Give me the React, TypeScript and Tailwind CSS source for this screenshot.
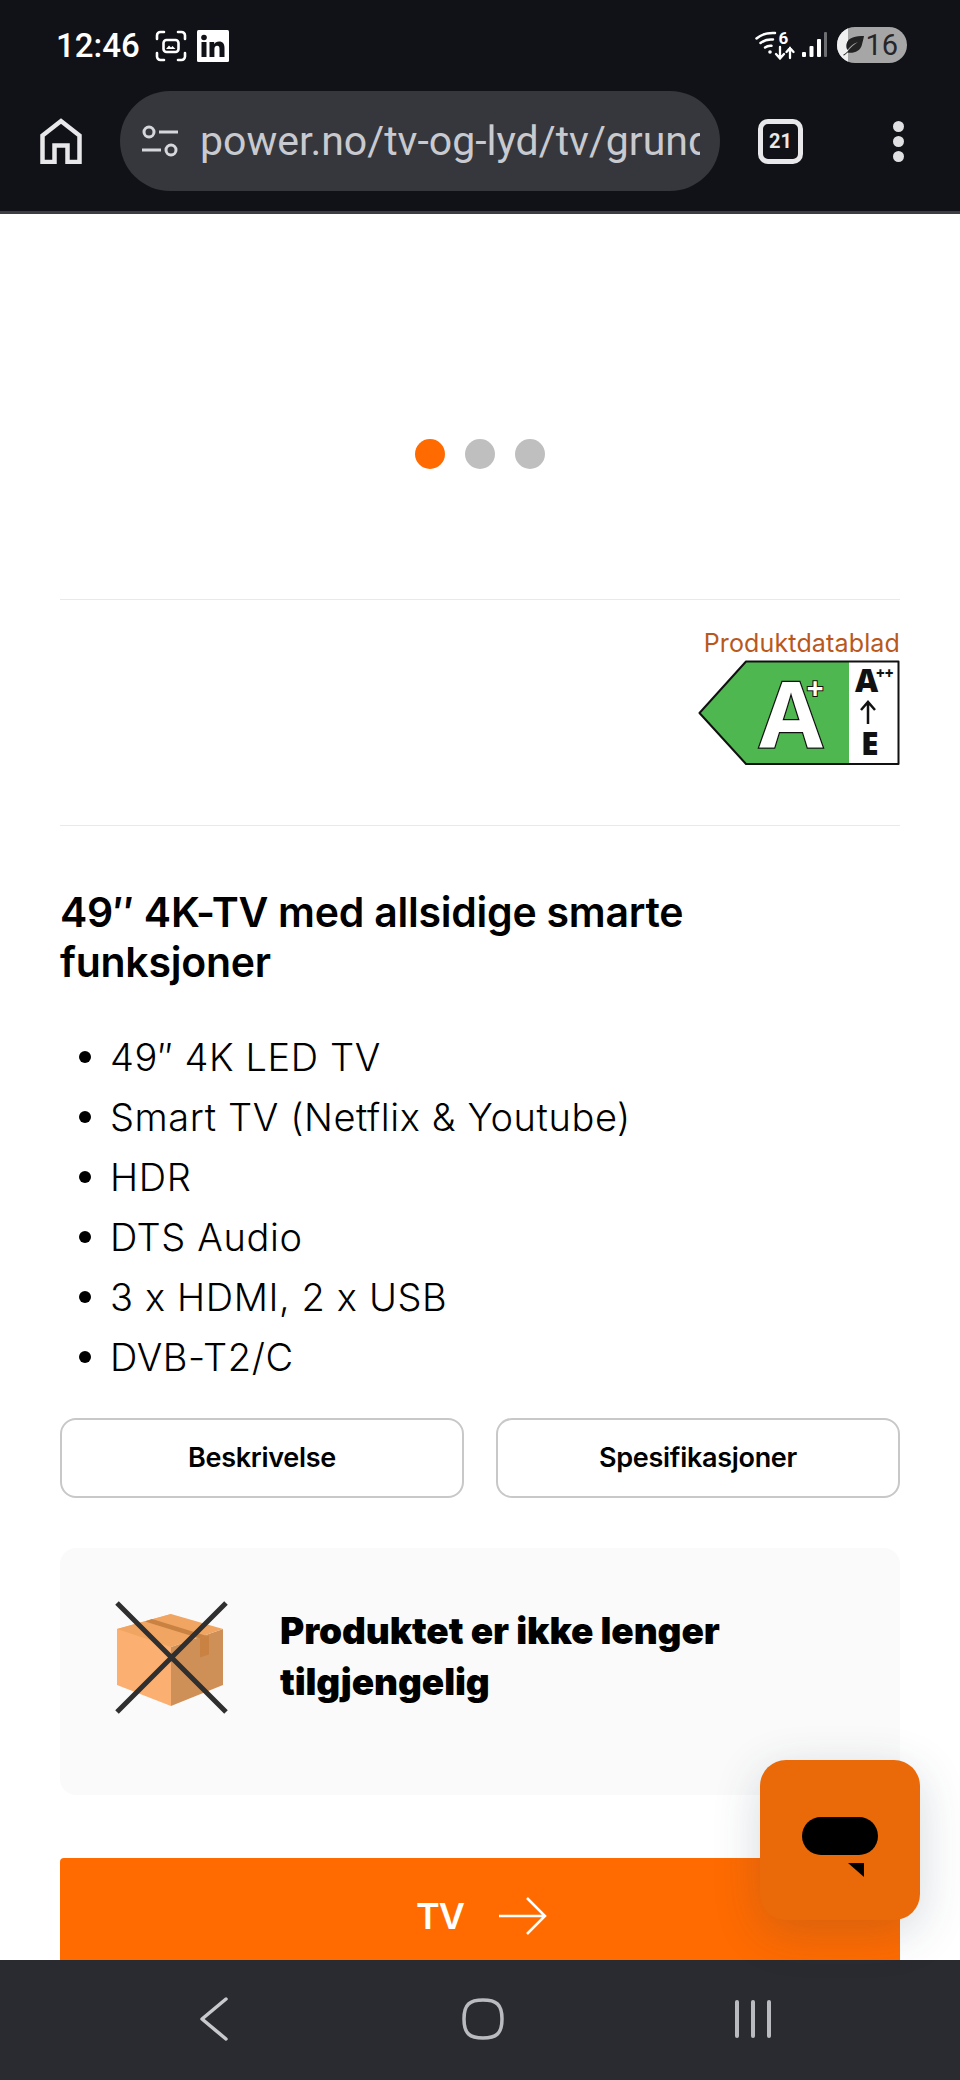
const specs = ['49″ 4K LED TV', 'Smart TV (Netflix & Youtube)', 'HDR', 'DTS Audio', '3 x HDMI, 2 x USB', 'DVB-T2/C']

function ScreenshotIcon() {
  return (
    <svg width="32" height="32" viewBox="0 0 32 32" fill="none" stroke="#fff" strokeWidth="2.6" strokeLinecap="round">
      <path d="M2 9V5.5A3.5 3.5 0 0 1 5.5 2H9M23 2h3.5A3.5 3.5 0 0 1 30 5.500V9M30 23v3.500a3.500 3.500 0 0 1-3.500 3.500H23M9 30H5.500A3.500 3.500 0 0 1 2 26.500V23" />
      <rect x="8.500" y="10" width="15" height="12" rx="3" />
      <path d="M11 19l3-3.500 2 2 1.500-1.500 3 3z" fill="#fff" stroke="none" />
    </svg>
  )
}

function LinkedInIcon() {
  return (
    <svg width="32" height="32" viewBox="0 0 32 32">
      <rect width="32" height="32" rx="1.500" fill="#fff" />
      <rect x="4.500" y="12" width="5" height="15" fill="#111217" />
      <circle cx="7" cy="7.500" r="2.800" fill="#111217" />
      <path d="M12.500 12h4.700v2.200c.9-1.600 2.600-2.600 4.800-2.600 4 0 5.500 2.600 5.500 6.500V27h-5v-8c0-2-.6-3.200-2.400-3.200s-2.700 1.300-2.700 3.200v8h-4.900z" fill="#111217" />
    </svg>
  )
}

function WifiIcon() {
  return (
    <svg width="40" height="30" viewBox="0 0 40 30" fill="none" stroke="#fff" strokeLinecap="round">
      <path d="M1.500 8.500C6 4.500 12 2.500 20 3" strokeWidth="2.500" />
      <path d="M5.500 13C9 10 13 9 18 9.500" strokeWidth="2.500" />
      <path d="M10 17.500c2-1.500 4-2 6.500-1.700" strokeWidth="2.500" />
      <circle cx="15" cy="22" r="1.800" fill="#fff" stroke="none" />
      <path d="M25 17v11M21 24l4 4.500 4-4.500M35 28V18M31.500 22l3.500-4 3.500 4" strokeWidth="2.300" />
      <text x="23.500" y="14" fill="#fff" stroke="none" fontSize="17" fontWeight="700" fontFamily="Roboto, sans-serif">6</text>
    </svg>
  )
}

function SignalIcon() {
  return (
    <svg width="25" height="26" viewBox="0 0 25 26">
      <rect x="0" y="20" width="4" height="5" rx="1" fill="#fff" />
      <rect x="7.500" y="14" width="4" height="11" rx="1" fill="#fff" />
      <rect x="15" y="7" width="4" height="18" rx="1" fill="#fff" />
      <rect x="22" y="0" width="3" height="25" rx="1" fill="#6d6e72" />
    </svg>
  )
}

function Battery() {
  return (
    <div className="relative flex h-[36px] w-[70px] items-center justify-end overflow-hidden rounded-full bg-[#a6a6a6] pr-[9px]">
      <div className="absolute bottom-0 left-0 top-0 w-[11px] bg-[#f0f0f0]" />
      <svg className="absolute left-[5px] top-[8px]" width="24" height="21" viewBox="0 0 24 21">
        <path d="M22 1C14 1 6 2 4.500 9c-.5 2.500 0 4.500 1 6C10 9.500 13 8 16 7c-4 2.500-7 5-10.500 9.500C4 18 2.500 19 1 20l1 .5c1.500-1 2.500-2 3.500-3 6 1 13-1 14.500-8C20.500 7 21.500 4 22 1z" fill="#222" />
      </svg>
      <span className="relative font-['Roboto',sans-serif] text-[29px] leading-none text-[#26262a]">16</span>
    </div>
  )
}

function HomeIcon() {
  return (
    <svg width="42" height="46" viewBox="0 0 42 46" fill="none" stroke="#e8e8ea" strokeWidth="4.500" strokeLinejoin="miter">
      <path d="M2.500 44V17.500L21 3l18.500 14.500V44H27.500V27.500h-13V44z" />
    </svg>
  )
}

function TuneIcon() {
  return (
    <svg width="38" height="32" viewBox="0 0 38 32" fill="none" stroke="#d6d7dc" strokeWidth="3">
      <circle cx="8" cy="7" r="5" />
      <path d="M18 7h19M1 25h19" />
      <circle cx="30" cy="25" r="5" />
    </svg>
  )
}

function EnergyLabel() {
  return (
    <svg width="202" height="106" viewBox="0 0 202 106" fontFamily="'Open Sans', sans-serif">
      <path d="M48 1.500H151V104H48L1.500 53z" fill="#4fb74f" />
      <path d="M48 1.500H200.500V104H48L1.500 53z" fill="none" stroke="#111" strokeWidth="2" strokeLinejoin="round" />
      <text x="93" y="88" textAnchor="middle" fontSize="92" fontWeight="700" fill="#fff" stroke="#111" strokeWidth="2.500" paintOrder="stroke">A</text>
      <text x="117" y="39" textAnchor="middle" fontSize="30" fontWeight="700" fill="#fff" stroke="#111" strokeWidth="2" paintOrder="stroke">+</text>
      <text x="157" y="32" fontSize="32" fontWeight="800" fill="#111">A</text>
      <text x="178" y="19" fontSize="15" fontWeight="800" fill="#111">++</text>
      <path d="M170 64V42M163 50l7-8 7 8" fill="none" stroke="#111" strokeWidth="2.500" />
      <text x="163" y="95" fontSize="32" fontWeight="800" fill="#111">E</text>
    </svg>
  )
}

function BoxCrossed() {
  return (
    <svg width="116" height="116" viewBox="0 0 116 116">
      <path d="M59 14L5 29v56l54 21z" fill="#fbb072" />
      <path d="M59 47l52-18v56l-52 21z" fill="#cf9058" />
      <path d="M59 14l52 15-52 18L5 29z" fill="#f0a562" />
      <path d="M33 21.500l7-2.500 55 17-7 2.500z" fill="#c98242" />
      <path d="M88 38.500l9-3v19l-9 3z" fill="#c98242" />
      <path d="M5 3l109 109M114 3L5 112" stroke="#2f2f2f" strokeWidth="5" />
    </svg>
  )
}

export default function App() {
  return (
    <div className="relative flex h-[2080px] w-[960px] flex-col overflow-hidden bg-white font-['Inter',sans-serif]">
      {/* Browser chrome */}
      <header className="h-[214px] shrink-0 border-b-[3px] border-[#3d3e43] bg-[#111217]">
        <div className="flex h-[91px] items-start justify-between pl-[56px] pr-[53px] pt-[27px]">
          <div className="flex items-center">
            <span className="w-[99px] font-['Roboto',sans-serif] text-[33px] font-medium leading-[38px] text-white">12:46</span>
            <ScreenshotIcon />
            <span className="ml-[10px]"><LinkedInIcon /></span>
          </div>
          <div className="flex items-center">
            <WifiIcon />
            <span className="ml-[7px] mr-[10px]"><SignalIcon /></span>
            <Battery />
          </div>
        </div>
        <div className="flex h-[100px] items-center">
          <div className="ml-[40px] w-[80px]"><HomeIcon /></div>
          <div className="flex h-[100px] w-[600px] items-center overflow-hidden rounded-full bg-[#36373c] pl-[21px]">
            <TuneIcon />
            <div className="ml-[21px] w-[500px] overflow-hidden whitespace-nowrap font-['Roboto',sans-serif] text-[41px] leading-[48px] text-[#c9cad0]">
              power.no/tv-og-lyd/tv/grundig
            </div>
          </div>
          <div className="ml-[38px] flex h-[45px] w-[45px] items-center justify-center rounded-[10px] border-[5px] border-[#e8e8ea] font-['Roboto',sans-serif] text-[20px] font-bold leading-none text-[#e8e8ea]">21</div>
          <div className="ml-[90px] flex flex-col gap-[4px]">
            <span className="h-[11px] w-[11px] rounded-full bg-[#e0e0e2]" />
            <span className="h-[11px] w-[11px] rounded-full bg-[#e0e0e2]" />
            <span className="h-[11px] w-[11px] rounded-full bg-[#e0e0e2]" />
          </div>
        </div>
      </header>

      {/* Page content */}
      <main className="min-h-0 flex-1 overflow-hidden px-[60px]">
        <div className="flex h-[386px] items-start justify-center gap-[20px] border-b border-[#e9e9e9] pt-[225px]">
          <span className="h-[30px] w-[30px] rounded-full bg-[#ff6b00]" />
          <span className="h-[30px] w-[30px] rounded-full bg-[#bfbfbf]" />
          <span className="h-[30px] w-[30px] rounded-full bg-[#bfbfbf]" />
        </div>

        <div className="flex h-[226px] flex-col items-end border-b border-[#e9e9e9] pt-[28px]">
          <div className="mb-[2px] text-[25px] leading-[30px] tracking-[0.15px] text-[#b9581e]">Produktdatablad</div>
          <EnergyLabel />
        </div>

        <h1 className="mt-[61px] text-[41px] font-semibold leading-[50px] tracking-[-0.25px] text-black">
          49″ 4K-TV med allsidige smarte
          <br />
          funksjoner
        </h1>

        <ul className="mt-[40px]">
          {specs.map((spec) => (
            <li key={spec} className="flex h-[60px] items-center gap-[19px] pl-[19px] text-[38px] font-light leading-[60px] tracking-[0.6px] text-black">
              <span className="h-[12px] w-[12px] rounded-full bg-black" />
              {spec}
            </li>
          ))}
        </ul>

        <div className="mt-[31px] grid grid-cols-2 gap-[32px]">
          <button className="h-[80px] rounded-[16px] border-2 border-[#c8c8c8] bg-white text-[27px] font-semibold tracking-[-0.3px] text-black">Beskrivelse</button>
          <button className="h-[80px] rounded-[16px] border-2 border-[#c8c8c8] bg-white text-[27px] font-semibold tracking-[-0.3px] text-black">Spesifikasjoner</button>
        </div>

        <div className="mt-[50px] flex h-[247px] items-start rounded-[16px] bg-[#fafafa] pl-[52px] pt-[52px]">
          <BoxCrossed />
          <p className="ml-[52px] mt-[5px] text-[37px] font-black leading-[51px] tracking-[-0.1px] text-black">
            Produktet er ikke lenger
            <br />
            tilgjengelig
          </p>
        </div>

        <div className="mt-[63px] flex h-[120px] items-start justify-center gap-[35px] rounded-t-[4px] bg-[#ff6b00] pl-[3px] pt-[38px]">
          <span className="text-[36px] font-semibold leading-[40px] tracking-[-1px] text-white">TV</span>
          <svg width="48" height="40" viewBox="0 0 48 40" fill="none" stroke="#fff" strokeWidth="2.500">
            <path d="M0 20h46M28 2l18 18-18 18" />
          </svg>
        </div>
      </main>

      {/* Android nav bar */}
      <nav className="flex h-[120px] shrink-0 items-center bg-[#2a2b30] pb-[2px]">
        <div className="ml-[200px]">
          <svg width="28" height="44" viewBox="0 0 28 44" fill="none" stroke="#c8c9cc" strokeWidth="3.500" strokeLinecap="round" strokeLinejoin="round">
            <path d="M26 2L2 22l24 20" />
          </svg>
        </div>
        <div className="ml-[234px]">
          <svg width="42" height="42" viewBox="0 0 42 42" fill="none" stroke="#b9bbc0" strokeWidth="3.500">
            <path d="M21 2c13 0 19 4 19 19s-6 19-19 19S2 36 2 21 8 2 21 2z" />
          </svg>
        </div>
        <div className="ml-[231px] flex h-[38px] gap-[12.500px]">
          <span className="w-[3.500px] rounded-full bg-[#b9bbc0]" />
          <span className="w-[3.500px] rounded-full bg-[#b9bbc0]" />
          <span className="w-[3.500px] rounded-full bg-[#b9bbc0]" />
        </div>
      </nav>

      {/* Chat launcher */}
      <button className="absolute left-[760px] top-[1760px] flex h-[160px] w-[160px] items-start justify-center rounded-[26px] bg-[#ea6a0a] pt-[57px] shadow-[0_12px_48px_rgba(40,60,80,0.2)]">
        <svg width="76" height="60" viewBox="0 0 76 60">
          <rect x="0" y="0" width="76" height="38" rx="19" fill="#000" />
          <path d="M46 46h16v14z" fill="#000" />
        </svg>
      </button>
    </div>
  )
}
